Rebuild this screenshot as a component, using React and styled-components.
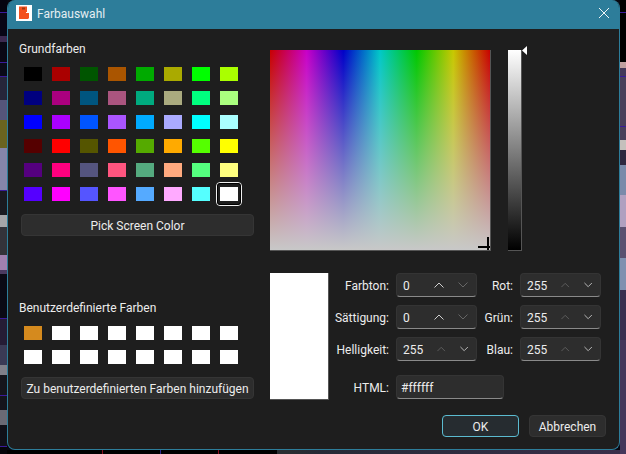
import React from 'react'
import styled, { createGlobalStyle } from 'styled-components'

const BASIC_COLORS = [
  '#000000', '#aa0000', '#005500', '#aa5500', '#00aa00', '#aaaa00', '#00ff00', '#aaff00',
  '#00007f', '#aa007f', '#00557f', '#aa557f', '#00aa7f', '#aaaa7f', '#00ff7f', '#aaff7f',
  '#0000ff', '#aa00ff', '#0055ff', '#aa55ff', '#00aaff', '#aaaaff', '#00ffff', '#aaffff',
  '#550000', '#ff0000', '#555500', '#ff5500', '#55aa00', '#ffaa00', '#55ff00', '#ffff00',
  '#55007f', '#ff007f', '#55557f', '#ff557f', '#55aa7f', '#ffaa7f', '#55ff7f', '#ffff7f',
  '#5500ff', '#ff00ff', '#5555ff', '#ff55ff', '#55aaff', '#ffaaff', '#55ffff', '#ffffff',
]

const CUSTOM_COLORS = ['#d58a1e', ...Array(15).fill('#ffffff')]

const FIELDS = [
  { label: 'Farbton:', value: '0', up: true, down: false, label2: 'Rot:', value2: '255' },
  { label: 'Sättigung:', value: '0', up: true, down: false, label2: 'Grün:', value2: '255' },
  { label: 'Helligkeit:', value: '255', up: false, down: true, label2: 'Blau:', value2: '255' },
]

function Chevron({ dir, on }) {
  return (
    <ChevronIcon viewBox="0 0 10 6" $on={on}>
      <path d={dir === 'up' ? 'M0.5 5.5 L5 1 L9.5 5.5' : 'M0.5 0.5 L5 5 L9.5 0.5'} />
    </ChevronIcon>
  )
}

function Spinner({ value, up, down }) {
  return (
    <SpinBox>
      <SpinValue>{value}</SpinValue>
      <Chevron dir="up" on={up} />
      <Chevron dir="down" on={down} />
    </SpinBox>
  )
}

export default function App() {
  return (
    <Desktop>
      <GlobalStyle />
      <Dialog>
        <TitleBar>
          <AppIcon viewBox="0 0 16 16">
            <rect width="16" height="16" fill="#fff" />
            <path
              d="M3 1.5 H11 V7 H10 V8 H13 V13 L12 14 H3 Z"
              fill="#f4511e"
            />
            <rect x="6" y="2.5" width="3" height="2" fill="#a33a12" />
          </AppIcon>
          <Title>Farbauswahl</Title>
          <CloseIcon viewBox="0 0 10 10">
            <path d="M0 0 L10 10 M10 0 L0 10" />
          </CloseIcon>
        </TitleBar>
        <Body>
          <LeftColumn>
            <SectionLabel>Grundfarben</SectionLabel>
            <SwatchGrid>
              {BASIC_COLORS.map((c, i) => (
                <Swatch key={i} $color={c} $selected={i === 47} />
              ))}
            </SwatchGrid>
            <WideButton>Pick Screen Color</WideButton>
            <CustomLabel>Benutzerdefinierte Farben</CustomLabel>
            <SwatchGrid>
              {CUSTOM_COLORS.map((c, i) => (
                <Swatch key={i} $color={c} />
              ))}
            </SwatchGrid>
            <WideButton>Zu benutzerdefinierten Farben hinzufügen</WideButton>
          </LeftColumn>
          <RightColumn>
            <PickerRow>
              <HueField>
                <CrossH />
                <CrossV />
              </HueField>
              <LumSlider>
                <LumArrow viewBox="0 0 5 9">
                  <path d="M0 4.5 L5 0 V9 Z" />
                </LumArrow>
              </LumSlider>
            </PickerRow>
            <ValueRow>
              <Preview />
              <FieldGrid>
                {FIELDS.map((f) => (
                  <React.Fragment key={f.label}>
                    <FieldLabel>{f.label}</FieldLabel>
                    <Spinner value={f.value} up={f.up} down={f.down} />
                    <FieldLabel>{f.label2}</FieldLabel>
                    <Spinner value={f.value2} up={false} down={true} />
                  </React.Fragment>
                ))}
                <HtmlLabel>HTML:</HtmlLabel>
                <HtmlInput>#ffffff</HtmlInput>
              </FieldGrid>
            </ValueRow>
            <ButtonRow>
              <DialogButton $primary>OK</DialogButton>
              <DialogButton>Abbrechen</DialogButton>
            </ButtonRow>
          </RightColumn>
        </Body>
      </Dialog>
    </Desktop>
  )
}

const GlobalStyle = createGlobalStyle`
  html, body {
    margin: 0;
    padding: 0;
    background: #000;
  }
  * {
    box-sizing: border-box;
  }
`

const Desktop = styled.div`
  width: 626px;
  height: 454px;
  padding: 0 6px 4px 7px;
  overflow: hidden;
  font-family: Roboto, 'Noto Sans', sans-serif;
  font-size: 12px;
  background-color: #07060f;
  background-repeat: no-repeat;
  background-position: left top, right top, left bottom;
  background-size: 7px 100%, 6px 100%, 100% 4px;
  background-image:
    linear-gradient(
      to bottom,
      #05030f 0 12px, #3a1a9a 12px 13px, #080615 13px 36px, #3d2a50 36px 42px,
      #0a0815 42px 62px, #3a1a9a 62px 63px, #0a0a18 63px 76px, #3a1a9a 76px 77px,
      #26263a 77px 100px, #55557a 100px 120px, #6a6420 120px 148px, #8585aa 148px 190px,
      #3a1a9a 190px 191px, #1a1a20 191px 215px, #a5a5a8 215px 227px, #33333a 227px 255px,
      #a080b0 255px 270px, #4a3a60 270px 274px, #0a0a15 274px 318px, #3a1a9a 318px 319px,
      #251c35 319px 345px, #3a3a55 345px 365px, #80808a 365px 375px, #15151c 375px 395px,
      #3a1a9a 395px 396px, #14141c 396px 410px, #6a6a75 410px 425px, #101018 425px 446px,
      #3a1a9a 446px 447px, #05050a 447px
    ),
    linear-gradient(
      to bottom,
      #000 0 12px, #3a1a9a 12px 13px, #000 13px 62px, #c0a0a0 62px 68px,
      #45385a 68px 76px, #3a1a9a 76px 77px, #4a3f5a 77px 126px, #3a1a9a 126px 127px,
      #4a3f5a 127px 140px, #c5c0bc 140px 150px, #2f2840 150px 165px, #7a8aaa 165px 195px,
      #b0a0c0 195px 227px, #5a5070 227px 258px, #8090b0 258px 290px, #3a3050 290px 340px,
      #45365a 340px
    ),
    linear-gradient(
      to right,
      #000 0 102px, #8a1020 102px 103px, #000 103px 160px, #2a2a90 160px 161px,
      #000 161px 218px, #8a1020 218px 219px, #000 219px 277px, #2a2e32 277px 290px,
      #262a36 320px, #3a2f4a 626px
    );
`

const Dialog = styled.div`
  width: 613px;
  height: 450px;
  display: flex;
  flex-direction: column;
  overflow: hidden;
  background: #1e1e1e;
  border: 1px solid #2d7d9a;
  border-top: 0;
  border-radius: 8px;
  color: #ececec;
`

const TitleBar = styled.div`
  height: 29px;
  flex: none;
  display: flex;
  align-items: center;
  padding: 0 10px 3px 8px;
  background: #2d7d9a;
`

const AppIcon = styled.svg`
  width: 16px;
  height: 16px;
  flex: none;
`

const Title = styled.div`
  flex: 1;
  margin-left: 5px;
  padding-top: 1px;
  color: #e4eef2;
`

const CloseIcon = styled.svg`
  width: 10px;
  height: 10px;
  stroke: #f2f6f8;
  stroke-width: 1;
  fill: none;
`

const Body = styled.div`
  flex: 1;
  display: flex;
  padding: 13px 13px 0 11px;
`

const LeftColumn = styled.div`
  width: 251px;
  flex: none;
  display: flex;
  flex-direction: column;
`

const SectionLabel = styled.div`
  height: 14px;
  line-height: 14px;
  margin-bottom: 11px;
`

const CustomLabel = styled(SectionLabel)`
  margin-top: 65px;
`

const SwatchGrid = styled.div`
  display: grid;
  grid-template-columns: repeat(8, 18px);
  grid-auto-rows: 14px;
  gap: 10px;
  margin-left: 5px;
`

const Swatch = styled.div`
  position: relative;
  background: ${(p) => p.$color};
  ${(p) =>
    p.$selected &&
    `
    &::after {
      content: '';
      position: absolute;
      inset: -5px -4px;
      border: 1px solid #f0f0f0;
      border-radius: 4px;
      outline: 1px solid #000;
      outline-offset: -2px;
    }
  `}
`

const WideButton = styled.div`
  width: 233px;
  height: 22px;
  margin: 13px 0 0 2px;
  padding-top: 1px;
  display: flex;
  align-items: center;
  justify-content: center;
  background: #2d2d2d;
  border: 1px solid #353535;
  border-radius: 4px;
  white-space: nowrap;
`

const RightColumn = styled.div`
  flex: 1;
  display: flex;
  flex-direction: column;
  padding-top: 8px;
`

const PickerRow = styled.div`
  display: flex;
  align-items: flex-start;
  gap: 17px;
`

const HueField = styled.div`
  position: relative;
  width: 221px;
  height: 201px;
  overflow: hidden;
  border-right: 1px solid #555;
  border-bottom: 1px solid #555;
  background:
    linear-gradient(to bottom, rgba(200, 200, 200, 0), rgba(200, 200, 200, 1)),
    linear-gradient(
      to right,
      #c80000 0%, #c800c8 16.67%, #0000c8 33.33%, #00c8c8 50%,
      #00c800 66.67%, #c8c800 83.33%, #c80000 100%
    );
`

const CrossH = styled.div`
  position: absolute;
  right: 0;
  bottom: 2px;
  width: 12px;
  height: 2px;
  background: #000;
`

const CrossV = styled.div`
  position: absolute;
  right: 1px;
  bottom: 0;
  width: 2px;
  height: 13px;
  background: #000;
`

const LumSlider = styled.div`
  position: relative;
  width: 14px;
  height: 201px;
  border-right: 1px solid #555;
  border-bottom: 1px solid #555;
  background: linear-gradient(to bottom, #fff, #000);
`

const LumArrow = styled.svg`
  position: absolute;
  left: 14px;
  top: -4px;
  width: 5px;
  height: 9px;
  fill: #fff;
`

const ValueRow = styled.div`
  display: flex;
  gap: 6px;
  margin-top: 22px;
`

const Preview = styled.div`
  width: 59px;
  height: 127px;
  background: #fff;
  border-right: 1px solid #555;
  border-bottom: 1px solid #555;
`

const FieldGrid = styled.div`
  display: grid;
  grid-template-columns: 54px 81px 29px 81px;
  grid-template-rows: 24px 24px 24px 30px;
  column-gap: 7px;
  row-gap: 8px;
`

const FieldLabel = styled.div`
  align-self: center;
  padding-top: 1px;
  white-space: nowrap;
  display: flex;
  justify-content: flex-end;
`

const HtmlLabel = styled(FieldLabel)`
  grid-column: 1;
  height: 24px;
  align-self: end;
  align-items: center;
`

const Field = styled.div`
  display: flex;
  align-items: center;
  background: #2d2d2d;
  border: 1px solid #343434;
  border-bottom-color: #8a8a8a;
  border-radius: 4px;
`

const SpinBox = styled(Field)`
  padding: 0 8px 0 6px;
`

const SpinValue = styled.div`
  flex: 1;
  padding-top: 1px;
`

const ChevronIcon = styled.svg`
  width: 10px;
  height: 6px;
  margin-left: 14px;
  fill: none;
  stroke: ${(p) => (p.$on ? '#d0d0d0' : '#666')};
  stroke-width: 1;
`

const HtmlInput = styled(Field)`
  grid-column: 2 / span 3;
  width: 108px;
  height: 24px;
  align-self: end;
  padding: 1px 4px 0;
`

const ButtonRow = styled.div`
  display: flex;
  justify-content: flex-end;
  gap: 10px;
  margin-top: 15px;
`

const DialogButton = styled.div`
  width: 77px;
  height: 22px;
  padding-top: 1px;
  display: flex;
  align-items: center;
  justify-content: center;
  background: ${(p) => (p.$primary ? '#262c30' : '#2d2d2d')};
  border: 1px solid ${(p) => (p.$primary ? '#5bbbd0' : '#353535')};
  border-radius: 4px;
`
